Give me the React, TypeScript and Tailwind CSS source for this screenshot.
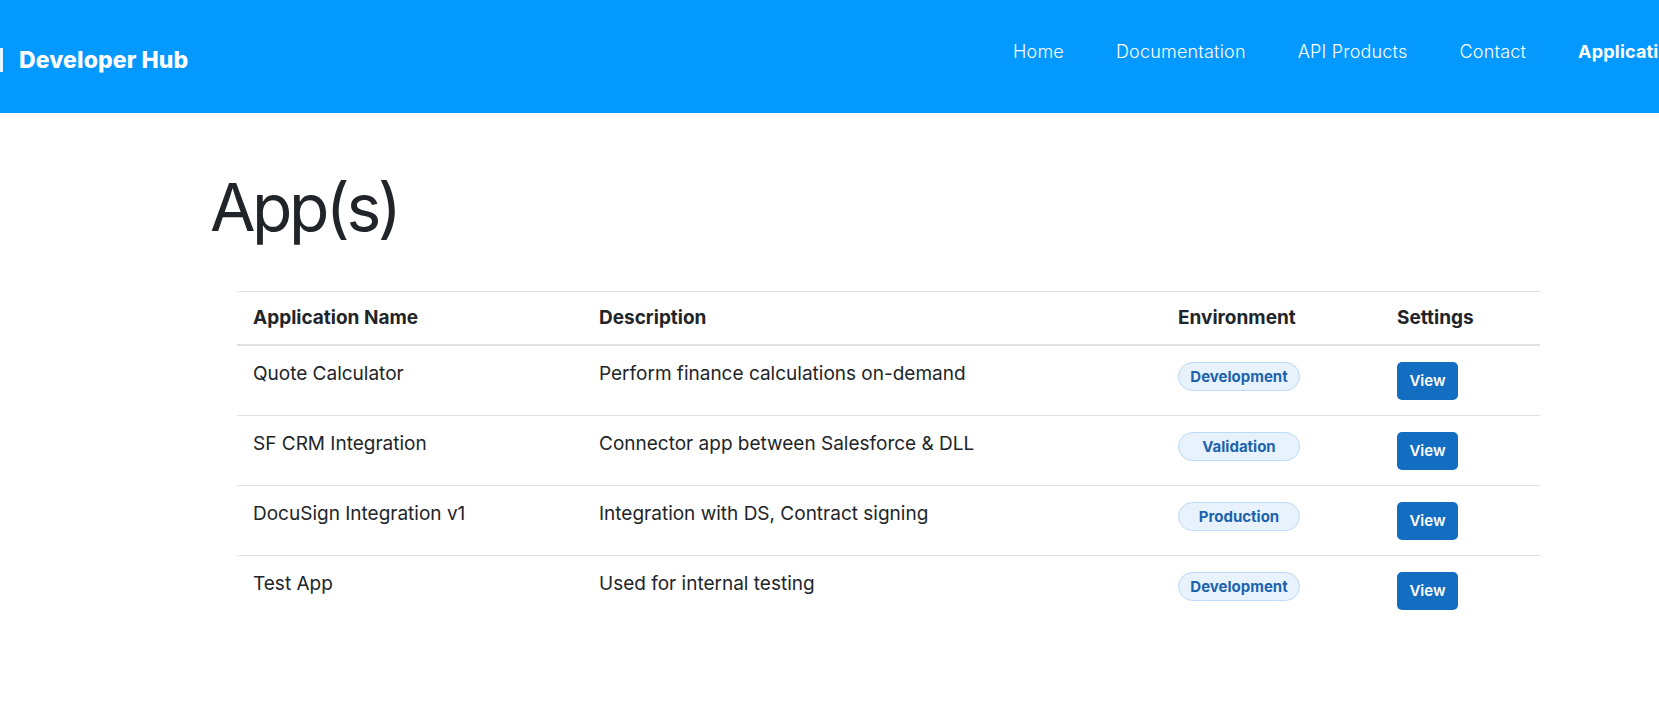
import React from "react";

type AppRow = {
  name: string;
  description: string;
  env: "Development" | "Validation" | "Production";
};

const apps: AppRow[] = [
  { name: "Quote Calculator", description: "Perform finance calculations on-demand", env: "Development" },
  { name: "SF CRM Integration", description: "Connector app between Salesforce & DLL", env: "Validation" },
  { name: "DocuSign Integration v1", description: "Integration with DS, Contract signing", env: "Production" },
  { name: "Test App", description: "Used for internal testing", env: "Development" },
];

const navItems = ["Home", "Documentation", "API Products", "Contact"];

function Header() {
  return (
    <header className="h-[113px] bg-[#0499ff] overflow-hidden flex items-start whitespace-nowrap font-['Inter',sans-serif]">
      <div className="flex-none w-[1013px] flex items-center pt-[46px]">
        <span className="block w-[3px] h-[24px] bg-white/90" />
        <span className="ml-[16px] text-white text-[23px] leading-[28px] font-extrabold tracking-[0.1px]">
          Developer Hub
        </span>
      </div>
      <nav className="flex gap-[52px] pt-[40px] text-[18px] leading-[24px] tracking-[0.2px] text-white">
        {navItems.map((item) => (
          <a key={item} href="#" className="font-light">
            {item}
          </a>
        ))}
        <a href="#" className="font-bold">
          Applications
        </a>
      </nav>
    </header>
  );
}

function EnvBadge({ env }: { env: AppRow["env"] }) {
  return (
    <span className="inline-block w-[122px] h-[29px] rounded-full border border-[#bcd9f8] bg-[#e8f2fd] text-center text-[15px] leading-[27px] font-bold text-[#1c63ae]">
      {env}
    </span>
  );
}

export default function App() {
  return (
    <div className="min-h-screen bg-white">
      <Header />
      <main className="pl-[210px] pb-20 font-['Inter',sans-serif] text-[#212529]">
        <h1 className="mt-[53px] text-[66px] leading-[82px] font-normal tracking-[-3.5px]">App(s)</h1>
        <table className="mt-[43px] ml-[27px] w-[1303px] border-collapse border-t border-[#dee2e6] text-[19px] leading-[24px] table-fixed">
          <colgroup>
            <col className="w-[346px]" />
            <col className="w-[579px]" />
            <col className="w-[219px]" />
            <col className="w-[159px]" />
          </colgroup>
          <thead>
            <tr className="border-b-2 border-[#dee2e6]">
              <th className="px-4 py-[14px] text-left font-bold">Application Name</th>
              <th className="px-4 py-[14px] text-left font-bold">Description</th>
              <th className="px-4 py-[14px] text-left font-bold">Environment</th>
              <th className="px-4 py-[14px] text-left font-bold">Settings</th>
            </tr>
          </thead>
          <tbody>
            {apps.map((app, i) => (
              <tr key={app.name} className={i < apps.length - 1 ? "border-b border-[#dee2e6]" : ""}>
                <td className="px-4 pt-4 pb-[15px] align-top">{app.name}</td>
                <td className="px-4 pt-4 pb-[15px] align-top">{app.description}</td>
                <td className="px-4 pt-4 pb-[15px] align-top">
                  <EnvBadge env={app.env} />
                </td>
                <td className="px-4 pt-4 pb-[15px] align-top">
                  <button className="w-[61px] h-[38px] rounded-[5px] bg-[#136dc1] text-white text-[15px] font-semibold">
                    View
                  </button>
                </td>
              </tr>
            ))}
          </tbody>
        </table>
      </main>
    </div>
  );
}
